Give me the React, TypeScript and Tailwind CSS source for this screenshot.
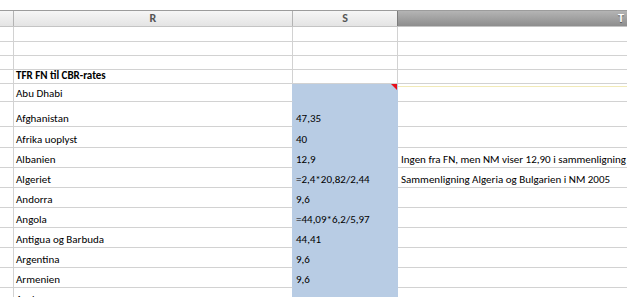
import React from "react";

type Row = { h: number; r?: string; s?: string; t?: string; bold?: boolean; blue?: boolean; note?: boolean };

const rows: Row[] = [
  { h: 15 },
  { h: 14 },
  { h: 14 },
  { h: 14, r: "TFR FN til CBR-rates", bold: true },
  { h: 18, r: "Abu Dhabi", blue: true, note: true },
  { h: 25, r: "Afghanistan", s: "47,35", blue: true },
  { h: 21, r: "Afrika uoplyst", s: "40", blue: true },
  { h: 20, r: "Albanien", s: "12,9", t: "Ingen fra FN, men NM viser 12,90 i sammenligning", blue: true },
  { h: 20, r: "Algeriet", s: "=2,4*20,82/2,44", t: "Sammenligning Algeria og Bulgarien i NM 2005", blue: true },
  { h: 20, r: "Andorra", s: "9,6", blue: true },
  { h: 20, r: "Angola", s: "=44,09*6,2/5,97", blue: true },
  { h: 20, r: "Antigua og Barbuda", s: "44,41", blue: true },
  { h: 20, r: "Argentina", s: "9,6", blue: true },
  { h: 20, r: "Armenien", s: "9,6", blue: true },
  { h: 20, r: "Aruba", blue: true },
];

export default function App() {
  return (
    <div
      className="w-[627px] h-[297px] overflow-hidden bg-white text-[11px] leading-[13px] text-black"
      style={{ fontFamily: "Carlito, Lato, 'Liberation Sans', sans-serif" }}
    >
      <div className="h-[10px] bg-white" />
      {/* column headers */}
      <div className="flex h-[17px] border-t border-b border-t-[#9c9c9c] border-b-[#c4c4c4] font-bold text-[12px]">
        <div className="w-[14px] shrink-0 border-r border-[#b4b4b4] bg-gradient-to-b from-[#f6f6f6] to-[#e4e4e4]" />
        <div className="w-[279px] shrink-0 border-r border-[#b4b4b4] bg-gradient-to-b from-[#f6f6f6] to-[#e4e4e4] flex items-center justify-center text-[#555]">
          R
        </div>
        <div className="w-[105px] shrink-0 border-r border-[#7c7c7c] bg-gradient-to-b from-[#f6f6f6] to-[#e4e4e4] flex items-center justify-center text-[#555]">
          S
        </div>
        <div className="w-[446px] shrink-0 bg-gradient-to-b from-[#b4b4b4] to-[#8e8e8e] flex items-center justify-center text-white [text-shadow:0_1px_0_#555]">
          T
        </div>
      </div>
      {rows.map((row, i) => (
        <div key={i} className="flex" style={{ height: row.h }}>
          <div className="w-[14px] shrink-0 border-r border-b border-[#d2d2d2]" />
          <div
            className={`w-[279px] shrink-0 border-b border-r border-b-[#d2d2d2] flex items-end pl-[2px] pb-[1px] whitespace-nowrap ${
              row.blue ? "border-r-[#b8cce4]" : "border-r-[#d2d2d2]"
            } ${row.bold ? "font-bold" : ""}`}
          >
            {row.r}
          </div>
          <div
            className={`relative w-[105px] shrink-0 border-b border-r flex items-end pl-[3px] pb-[1px] whitespace-nowrap ${
              row.blue ? "bg-[#b8cce4] border-[#b8cce4]" : "border-[#d2d2d2]"
            }`}
          >
            {row.s}
            {row.note && (
              <div className="absolute top-0 right-0 w-0 h-0 border-t-[6px] border-l-[6px] border-t-[#e8101a] border-l-transparent" />
            )}
          </div>
          <div className="relative w-[446px] shrink-0 border-b border-[#d2d2d2] flex items-end pl-[3px] pb-[1px] whitespace-nowrap">
            {row.note && <div className="absolute left-0 right-0 top-[2px] h-px bg-[#f1eab8]" />}
            {row.t}
          </div>
        </div>
      ))}
    </div>
  );
}
